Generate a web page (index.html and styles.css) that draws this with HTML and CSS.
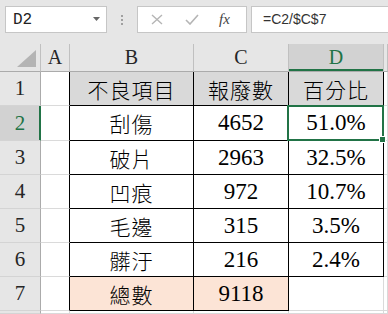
FILE: index.html
```html
<!DOCTYPE html>
<html lang="zh-Hant">
<head>
    <meta charset="UTF-8">
    <title>Excel - 不良項目</title>
    <link rel="stylesheet" href="styles.css">
</head>
<body>
    <div class="bar">
        <div class="namebox">
            <span>D2</span>
            <svg class="drop" width="7" height="4" viewBox="0 0 7 4"><polygon points="0,0 7,0 3.5,4" fill="#666"/></svg>
        </div>
        <div class="grip"><i></i><i></i><i></i></div>
        <div class="fxbox">
            <svg width="12" height="11" viewBox="0 0 12 11"><path d="M1 1 L11 10 M11 1 L1 10" stroke="#b5b5b5" stroke-width="1.4" fill="none"/></svg>
            <svg width="14" height="11" viewBox="0 0 14 11"><path d="M1 6 L5 10 L13 1" stroke="#b5b5b5" stroke-width="1.6" fill="none"/></svg>
            <span class="fx">fx</span>
        </div>
        <div class="formula">=C2/$C$7</div>
    </div>

    <div class="sheet">
        <div class="hd corner"><span class="tri"></span></div>
        <div class="hd col">A</div>
        <div class="hd col">B</div>
        <div class="hd col">C</div>
        <div class="hd col on">D</div>
        <div class="hd col"></div>

        <div class="hd row">1</div>
        <div class="c edge"></div>
        <div class="c t th cjk">不良項目</div>
        <div class="c t th cjk">報廢數</div>
        <div class="c t th cjk">百分比</div>
        <div class="c"></div>

        <div class="hd row on">2</div>
        <div class="c edge"></div>
        <div class="c t cjk">刮傷</div>
        <div class="c t num">4652</div>
        <div class="c t num sel-cell">51.0%<span class="sel"><span class="handle"></span></span></div>
        <div class="c"></div>

        <div class="hd row">3</div>
        <div class="c edge"></div>
        <div class="c t cjk">破片</div>
        <div class="c t num">2963</div>
        <div class="c t num">32.5%</div>
        <div class="c"></div>

        <div class="hd row">4</div>
        <div class="c edge"></div>
        <div class="c t cjk">凹痕</div>
        <div class="c t num">972</div>
        <div class="c t num">10.7%</div>
        <div class="c"></div>

        <div class="hd row">5</div>
        <div class="c edge"></div>
        <div class="c t cjk">毛邊</div>
        <div class="c t num">315</div>
        <div class="c t num">3.5%</div>
        <div class="c"></div>

        <div class="hd row">6</div>
        <div class="c edge"></div>
        <div class="c t cjk">髒汙</div>
        <div class="c t num">216</div>
        <div class="c t num">2.4%</div>
        <div class="c"></div>

        <div class="hd row">7</div>
        <div class="c edge"></div>
        <div class="c t total cjk">總數</div>
        <div class="c t total num">9118</div>
        <div class="c"></div>
        <div class="c"></div>

        <div class="hd row"></div>
        <div class="c"></div>
        <div class="c"></div>
        <div class="c"></div>
        <div class="c"></div>
        <div class="c"></div>
    </div>
</body>
</html>
```

FILE: styles.css
```css
body {
    margin: 0;
    width: 388px;
    height: 314px;
    overflow: hidden;
    background-color: #ffffff;
    font-family: 'Liberation Serif', serif;
}

/* formula bar */
.bar {
    display: flex;
    align-items: flex-start;
    height: 44px;
    padding: 6px 0 0 5px;
    box-sizing: border-box;
    background-color: #e6e6e6;
    white-space: nowrap;
}

.namebox, .fxbox, .formula {
    height: 27px;
    box-sizing: border-box;
    border: 1px solid #c6c6c6;
    background-color: #ffffff;
}

.namebox {
    width: 102px;
    display: flex;
    align-items: center;
    justify-content: space-between;
    padding: 0 6px 0 7px;
    font-family: 'Liberation Mono', monospace;
    font-size: 16px;
    color: #222;
}

.drop {
    margin-top: -2px;
}

.grip {
    width: 30px;
    height: 27px;
    display: flex;
    flex-direction: column;
    align-items: center;
    justify-content: center;
    gap: 2px;
}

.grip i {
    width: 2px;
    height: 2px;
    background-color: #a0a0a0;
}

.fxbox {
    width: 110px;
    display: flex;
    align-items: center;
    padding-left: 13px;
    gap: 22px;
}

.fx {
    font-style: italic;
    font-size: 15px;
    color: #444;
    margin-left: -2px;
}

.formula {
    flex: 1;
    margin-left: 4px;
    padding-left: 11px;
    font-family: 'Liberation Sans', sans-serif;
    font-size: 14px;
    line-height: 25px;
    color: #333;
    border-right: none;
}

/* sheet grid */
.sheet {
    display: grid;
    grid-template-columns: 41px 29px 124px 95px 95px 1fr;
    grid-template-rows: 28px 34px 35px 34px 34px 34px 34px 34px 3px;
    height: 270px;
    overflow: hidden;
}

.sheet > div {
    box-sizing: border-box;
    border-right: 1px solid #dadada;
    border-bottom: 1px solid #dadada;
    display: flex;
    align-items: center;
    justify-content: center;
}

.hd {
    background-color: #e6e6e6;
    color: #262626;
    font-size: 20px;
}

.hd.col {
    border-right-color: #c0c0c0;
    border-bottom-color: #ababab;
}

.hd.corner {
    position: relative;
    border-right-color: #c0c0c0;
    border-bottom-color: #ababab;
}

.tri {
    position: absolute;
    right: 4px;
    bottom: 4px;
    width: 0;
    height: 0;
    border-left: 19px solid transparent;
    border-bottom: 17px solid #b4b4b4;
}

.hd.row {
    border-right-color: #ababab;
    border-bottom-color: #d4d4d4;
    font-size: 21px;
}

.hd.on {
    background-color: #d2d2d2;
    color: #217346;
}

.hd.col.on {
    box-shadow: inset 0 -2px 0 #217346;
}

.hd.row.on {
    box-shadow: inset -1px 0 0 #217346;
    border-right-color: #217346;
}

.c {
    color: #000;
}

/* bordered table B1:D6 and B7:C7 */
.c.edge {
    border-right-color: #000;
}

.c.t {
    border-right-color: #000;
    border-bottom-color: #000;
}

.th {
    background-color: #d9d9d9;
}

.total {
    background-color: #fce4d6;
}

.cjk {
    font-family: 'Noto Sans CJK TC', sans-serif;
    font-size: 21px;
    letter-spacing: 1px;
    font-weight: 300;
}

.num {
    font-size: 23px;
}

.sel-cell {
    position: relative;
}

.sel {
    position: absolute;
    top: -1px;
    left: -2px;
    right: -1px;
    bottom: -1px;
    border: 2px solid #217346;
}

.handle {
    position: absolute;
    right: -4px;
    bottom: -4px;
    width: 5px;
    height: 5px;
    background-color: #217346;
    border: 1px solid #ffffff;
}
```
